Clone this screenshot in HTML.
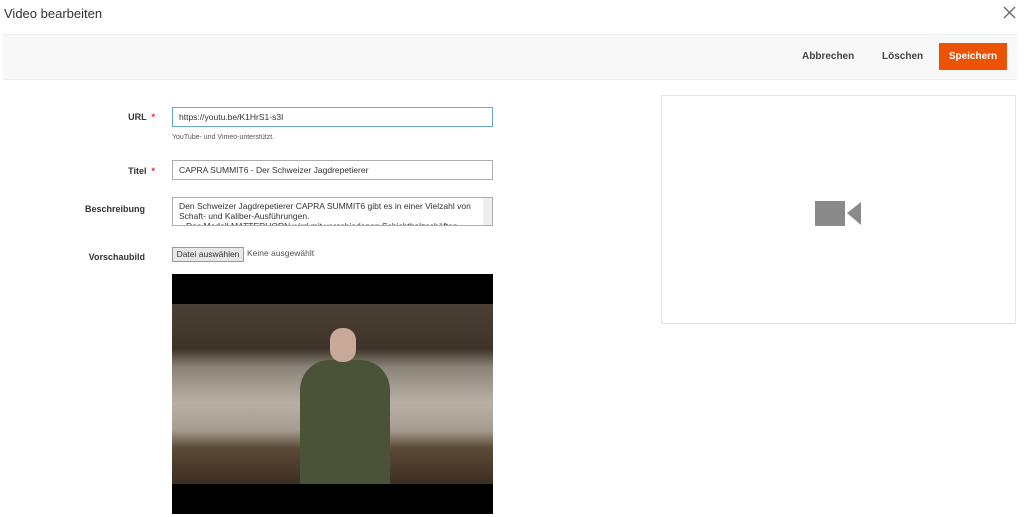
<!DOCTYPE html><html><head><style>
body{margin:0;width:1024px;height:517px;background:#fff;font-family:"Liberation Sans",sans-serif;position:relative;overflow:hidden;color:#333}
.a{position:absolute}
.lbl{font-size:9px;font-weight:bold;color:#333;text-align:right;width:155px;left:0}
.inp{border:1px solid #adadad;height:18px;font-size:8.5px;line-height:18px;padding-left:6px;box-sizing:border-box;background:#fff}
.star{color:#e22626;font-size:9px}
</style></head><body>
<div class="a" style="left:4px;top:6px;font-size:13px;color:#333">Video bearbeiten</div>
<svg class="a" style="left:1003px;top:6px" width="13" height="13"><path d="M1 1L12 12M12 1L1 12" stroke="#666" stroke-width="1.3"/></svg>
<div class="a" style="left:3px;top:34px;width:1014px;height:44px;background:#f8f8f8;border-top:1px solid #eee;border-bottom:1px solid #eee"></div>
<div class="a" style="left:802px;top:51px;font-size:10px;font-weight:bold;color:#444">Abbrechen</div>
<div class="a" style="left:882px;top:51px;font-size:10px;font-weight:bold;color:#444">Löschen</div>
<div class="a" style="left:939px;top:43px;width:68px;height:27px;background:#eb5202;color:#fff;font-size:10px;font-weight:bold;text-align:center;line-height:27px">Speichern</div>

<div class="a lbl" style="top:112px">URL <span class="star">&nbsp;*</span></div>
<div class="a inp" style="left:172px;top:107px;width:321px;height:20px;border-color:#68a8c0">https://youtu.be/K1HrS1-s3I</div>
<div class="a" style="left:172px;top:134px;font-size:7px;color:#555">YouTube- und Vimeo-unterstützt.</div>
<div class="a lbl" style="top:166px">Titel <span class="star">&nbsp;*</span></div>
<div class="a inp" style="left:172px;top:160px;width:321px;height:20px">CAPRA SUMMIT6 - Der Schweizer Jagdrepetierer</div>
<div class="a lbl" style="top:204px;width:155px">Beschreibung&nbsp;&nbsp;&nbsp;&nbsp;</div>
<div class="a inp" style="left:172px;top:197px;width:321px;height:29px;line-height:10px;padding-top:3px;overflow:hidden">Den Schweizer Jagdrepetierer CAPRA SUMMIT6 gibt es in einer Vielzahl von<br>Schaft- und Kaliber-Ausführungen.<br>&nbsp;&nbsp;&nbsp;Das Modell MATTERHORN wird mit verschiedenen Schichtholzschäften</div>
<div class="a" style="left:483px;top:198px;width:9px;height:27px;background:#eee"></div>
<div class="a lbl" style="top:252px">Vorschaubild&nbsp;&nbsp;&nbsp;&nbsp;</div>
<div class="a" style="left:172px;top:247px;width:70px;height:13px;border:1px solid #999;background:#e8e8e8;font-size:8.5px;line-height:13px;text-align:center">Datei auswählen</div>
<div class="a" style="left:247px;top:248px;font-size:8.5px;color:#555">Keine ausgewählt</div>

<div class="a" style="left:172px;top:274px;width:321px;height:240px;background:#000"></div>
<div class="a" style="left:172px;top:304px;width:321px;height:180px;background:linear-gradient(#4a4036 0%,#3d3328 25%,#8a8478 35%,#b8b0a4 55%,#a69d90 70%,#5c4a38 80%,#3b2e22 100%)"></div>
<div class="a" style="left:300px;top:360px;width:90px;height:124px;background:#4a5238;border-radius:30px 30px 0 0"></div>
<div class="a" style="left:330px;top:328px;width:26px;height:34px;background:#c8a898;border-radius:12px"></div>

<div class="a" style="left:661px;top:95px;width:355px;height:229px;border:1px solid #e3e3e3;box-sizing:border-box"></div>
<svg class="a" style="left:814px;top:200px" width="50" height="27"><rect x="1" y="1" width="30" height="25" fill="#8a8a8a"/><polygon points="33,13 47,2 47,25" fill="#8a8a8a"/></svg>
</body></html>
